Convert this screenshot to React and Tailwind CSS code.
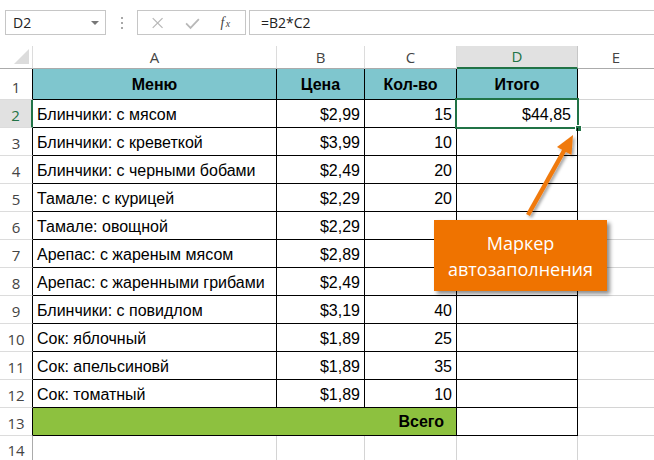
import React from "react";

const ui = { fontFamily: '"Open Sans", "Noto Sans", sans-serif' };
const cellFont = { fontFamily: '"Liberation Sans", Arial, sans-serif' };

const rows = [
  ["Блинчики: с мясом", "$2,99", "15", "$44,85"],
  ["Блинчики: с креветкой", "$3,99", "10", ""],
  ["Блинчики: с черными бобами", "$2,49", "20", ""],
  ["Тамале: с курицей", "$2,29", "20", ""],
  ["Тамале: овощной", "$2,29", "", ""],
  ["Арепас: с жареным мясом", "$2,89", "", ""],
  ["Арепас: с жаренными грибами", "$2,49", "", ""],
  ["Блинчики: с повидлом", "$3,19", "40", ""],
  ["Сок: яблочный", "$1,89", "25", ""],
  ["Сок: апельсиновй", "$1,89", "35", ""],
  ["Сок: томатный", "$1,89", "10", ""],
];

function RowHead({ n, selected }) {
  return (
    <div
      className={
        "flex items-end justify-center pb-[3px] text-[15px] leading-[18px] border-b border-[#dcdcdc] " +
        (selected
          ? "bg-[#e1e1e1] text-[#217346] border-r-2 border-r-[#217346]"
          : "bg-white text-[#444] border-r border-r-black")
      }
      style={ui}
    >
      {n}
    </div>
  );
}

export default function App() {
  return (
    <div className="w-[654px] h-[460px] bg-white overflow-hidden relative select-none">
      {/* Formula bar */}
      <div className="h-[46px] flex items-start pt-[10px] pl-[5px] gap-0" style={ui}>
        <div className="w-[101px] h-[25px] border border-[#c6c6c6] flex items-center pl-[7px] pr-[6px] text-[14px] text-[#222]">
          <span className="flex-1">D2</span>
          <span className="w-0 h-0 border-l-[4px] border-r-[4px] border-t-[4px] border-l-transparent border-r-transparent border-t-[#777]"></span>
        </div>
        <div className="w-[31px] h-[25px] flex flex-col items-center justify-center gap-[3px]">
          <span className="w-[2px] h-[2px] bg-[#a8a8a8]"></span>
          <span className="w-[2px] h-[2px] bg-[#a8a8a8]"></span>
          <span className="w-[2px] h-[2px] bg-[#a8a8a8]"></span>
        </div>
        <div className="w-[109px] h-[25px] border border-[#c6c6c6] flex items-center">
          <svg width="109" height="23" viewBox="0 0 109 23">
            <path d="M15 7 L25 17 M25 7 L15 17" stroke="#b8b8b8" strokeWidth="1.3" fill="none" />
            <path d="M49 12.5 L53.5 17 L62 8" stroke="#b8b8b8" strokeWidth="1.8" fill="none" />
            <text x="84" y="16" fontFamily='"Liberation Serif", serif' fontStyle="italic" fontSize="14" fill="#444">f</text>
            <text x="89.5" y="16" fontFamily='"Liberation Serif", serif' fontStyle="italic" fontSize="10" fill="#444">x</text>
          </svg>
        </div>
        <div className="flex-1 ml-[3px] h-[25px] border-t border-b border-l border-[#c6c6c6] flex items-center pl-[11px] text-[14px] text-[#222]">
          =B2*C2
        </div>
      </div>

      {/* Grid */}
      <div
        className="grid grid-cols-[33px_244px_88px_92px_121px_76px] grid-rows-[23px_31px_repeat(12,28px)_24px]"
        style={cellFont}
      >
        {/* Column headers */}
        <div className="relative bg-white border-r border-[#dcdcdc] border-b border-b-[#ababab]">
          <div className="absolute right-[3px] bottom-[4px] w-0 h-0 border-l-[15px] border-t-[15px] border-l-transparent border-t-transparent border-b-0 border-r-0" style={{ borderRight: "0", borderBottom: "15px solid #dcdcdc" }}></div>
        </div>
        {["A", "B", "C"].map((c) => (
          <div key={c} className="flex items-center justify-center text-[15px] text-[#444] border-r border-[#dcdcdc] border-b border-b-[#ababab]" style={ui}>
            {c}
          </div>
        ))}
        <div className="flex items-center justify-center text-[15px] text-[#217346] bg-[#e1e1e1] border-r border-[#c6c6c6] border-b-2 border-b-[#217346]" style={ui}>
          D
        </div>
        <div className="flex items-center justify-center text-[15px] text-[#444] border-b border-b-[#ababab]" style={ui}>
          E
        </div>

        {/* Row 1 */}
        <RowHead n={1} />
        {["Меню", "Цена", "Кол-во", "Итого"].map((h) => (
          <div key={h} className="bg-[#7fc6ce] flex items-center justify-center font-bold text-[16px] text-black border-r border-b border-black pt-[2px]">
            {h}
          </div>
        ))}
        <div className="border-b border-[#d4d4d4]"></div>

        {/* Data rows */}
        {rows.map((r, i) => {
          const n = i + 2;
          const sel = n === 2;
          return (
            <React.Fragment key={n}>
              <RowHead n={n} selected={sel} />
              <div className="flex items-end pl-[4px] pb-[2px] text-[16px] leading-[20px] text-black border-r border-b border-black whitespace-nowrap overflow-hidden">
                {r[0]}
              </div>
              <div className="flex items-end justify-end pr-[4px] pb-[2px] text-[16px] leading-[20px] text-black border-r border-b border-black">
                {r[1]}
              </div>
              <div className="flex items-end justify-end pr-[4px] pb-[2px] text-[16px] leading-[20px] text-black border-r border-b border-black">
                {r[2]}
              </div>
              <div className="relative flex items-end justify-end pr-[6px] pb-[2px] text-[16px] leading-[20px] text-black border-r border-b border-black">
                {r[3]}
                {sel && (
                  <>
                    <div className="absolute left-[-2px] top-[-2px] right-[-2px] bottom-[-2px] border-2 border-[#217346] pointer-events-none"></div>
                    <div className="absolute right-[-5px] bottom-[-5px] w-[7px] h-[7px] bg-[#217346] border border-white"></div>
                  </>
                )}
              </div>
              <div className="border-b border-[#d4d4d4]"></div>
            </React.Fragment>
          );
        })}

        {/* Row 13 */}
        <RowHead n={13} />
        <div className="col-span-3 bg-[#8dc13f] flex items-end justify-end pr-[12px] pb-[3px] font-bold text-[16px] leading-[20px] text-black border-r border-b border-black">
          Всего
        </div>
        <div className="border-r border-b border-black"></div>
        <div className="border-b border-[#d4d4d4]"></div>

        {/* Row 14 */}
        <div className="flex items-end justify-center pb-[1px] text-[15px] leading-[18px] text-[#444] border-r border-[#ababab]" style={ui}>
          14
        </div>
        <div className="border-r border-[#d4d4d4]"></div>
        <div className="border-r border-[#d4d4d4]"></div>
        <div className="border-r border-[#d4d4d4]"></div>
        <div className="border-r border-[#d4d4d4]"></div>
        <div></div>
      </div>

      {/* Arrow */}
      <svg className="absolute left-0 top-0 pointer-events-none" width="654" height="460" viewBox="0 0 654 460">
        <defs>
          <filter id="sh" x="-20%" y="-20%" width="140%" height="140%">
            <feDropShadow dx="2" dy="2" stdDeviation="1.5" floodColor="#000" floodOpacity="0.35" />
          </filter>
        </defs>
        <g filter="url(#sh)">
          <line x1="528" y1="215" x2="565" y2="149" stroke="#f07a10" strokeWidth="4.5" strokeLinecap="butt" />
          <polygon points="573,135 557,147 571.5,155" fill="#f07a10" />
        </g>
      </svg>

      {/* Callout */}
      <div
        className="absolute left-[434px] top-[220px] w-[173px] h-[71px] bg-[#ef7300] text-white flex flex-col items-center justify-center text-[18px] leading-[26px] shadow-[3px_3px_4px_rgba(0,0,0,0.45)]"
        style={ui}
      >
        <span>Маркер</span>
        <span>автозаполнения</span>
      </div>
    </div>
  );
}
